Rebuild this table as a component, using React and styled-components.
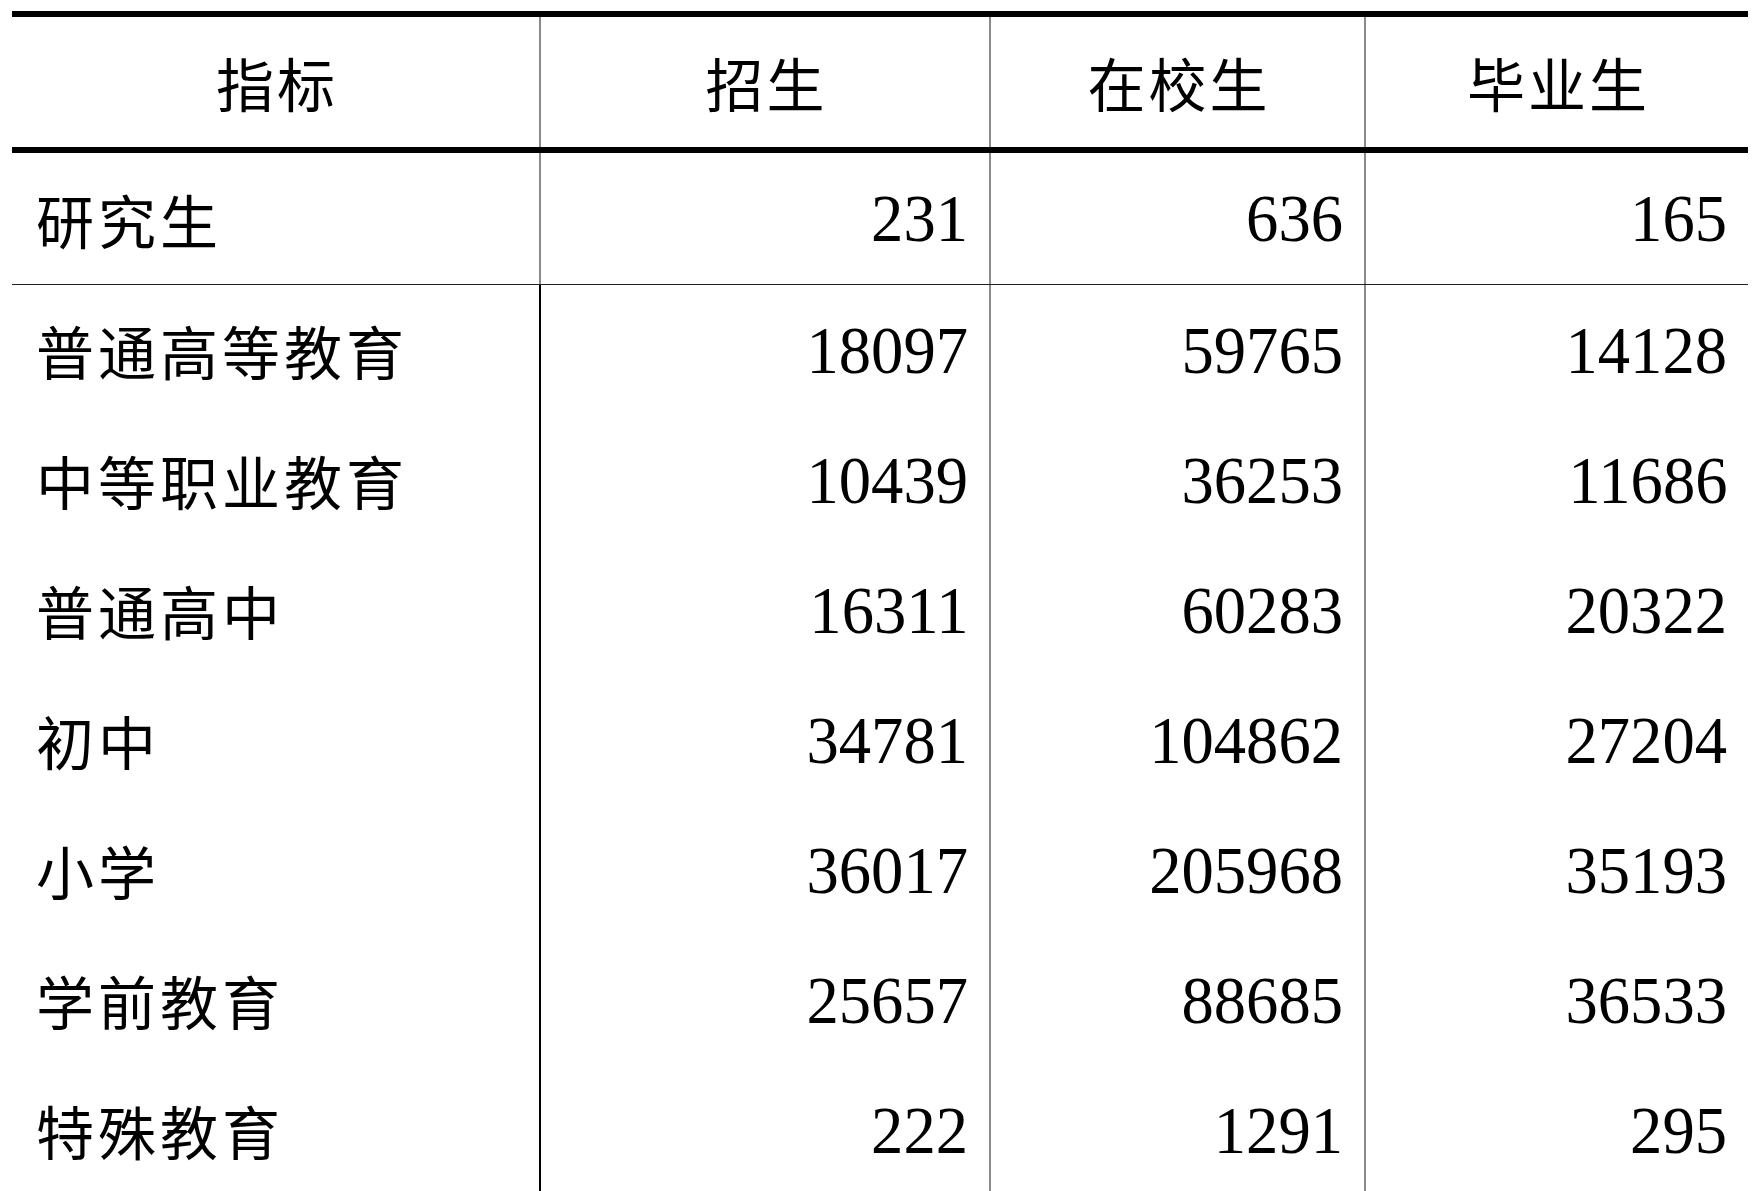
import React from "react";
import styled, { createGlobalStyle } from "styled-components";

const GlobalStyle = createGlobalStyle`
  html, body { margin: 0; padding: 0; background: #fff; }
  body { font-family: "Noto Sans CJK SC", "Noto Sans", sans-serif; color: #000; }
`;

const Page = styled.div`
  padding: 11px 0 0 12px;
`;

const Table = styled.div`
  width: 1736px;
  display: flex;
  flex-direction: column;
`;

const Row = styled.div`
  display: grid;
  grid-template-columns: 527px 450px 375px 384px;
  height: ${(p) => p.$height}px;
  box-sizing: content-box;
  border-top: ${(p) => (p.$top ? "6px solid #000" : "none")};
  border-bottom: ${(p) => p.$bottom || "none"};
`;

const Cell = styled.div`
  box-sizing: border-box;
  display: flex;
  align-items: center;
  justify-content: ${(p) => (p.$align === "right" ? "flex-end" : p.$align === "center" ? "center" : "flex-start")};
  padding: ${(p) => (p.$align === "right" ? "0 21px 0 0" : p.$align === "center" ? "0" : "0 0 0 24px")};
  border-left: ${(p) => (p.$line ? `2px solid ${p.$line}` : "none")};
  overflow: hidden;
`;

const CnText = styled.span`
  font-family: "Noto Sans CJK SC", "Noto Sans", sans-serif;
  font-size: 58px;
  letter-spacing: 4px;
  line-height: 1;
  white-space: nowrap;
`;

const HeadText = styled(CnText)`
  letter-spacing: 3px;
  margin-right: -3px;
`;

const Num = styled.span`
  display: inline-block;
  font-family: "Liberation Serif", "Times New Roman", serif;
  font-size: 68px;
  line-height: 1.15;
  transform: scaleX(0.95);
  transform-origin: right center;
  white-space: nowrap;
`;

const headers = ["指标", "招生", "在校生", "毕业生"];

const rows = [
  ["研究生", "231", "636", "165"],
  ["普通高等教育", "18097", "59765", "14128"],
  ["中等职业教育", "10439", "36253", "11686"],
  ["普通高中", "16311", "60283", "20322"],
  ["初中", "34781", "104862", "27204"],
  ["小学", "36017", "205968", "35193"],
  ["学前教育", "25657", "88685", "36533"],
  ["特殊教育", "222", "1291", "295"],
];

export default function App() {
  return (
    <>
      <GlobalStyle />
      <Page>
        <Table>
          <Row $height={130} $top $bottom="6px solid #000">
            {headers.map((h, i) => (
              <Cell key={h} $align="center" $line={i > 0 ? "#8a8a8a" : null}>
                <HeadText>{h}</HeadText>
              </Cell>
            ))}
          </Row>
          {rows.map((r, ri) => (
            <Row
              key={r[0]}
              $height={ri === 0 ? 131 : 130}
              $bottom={ri === 0 ? "1px solid #222" : null}
            >
              <Cell>
                <CnText>{r[0]}</CnText>
              </Cell>
              {r.slice(1).map((v, ci) => (
                <Cell
                  key={ci}
                  $align="right"
                  $line={ci === 0 && ri > 0 ? "#000" : "#8a8a8a"}
                >
                  <Num>{v}</Num>
                </Cell>
              ))}
            </Row>
          ))}
        </Table>
      </Page>
    </>
  );
}
